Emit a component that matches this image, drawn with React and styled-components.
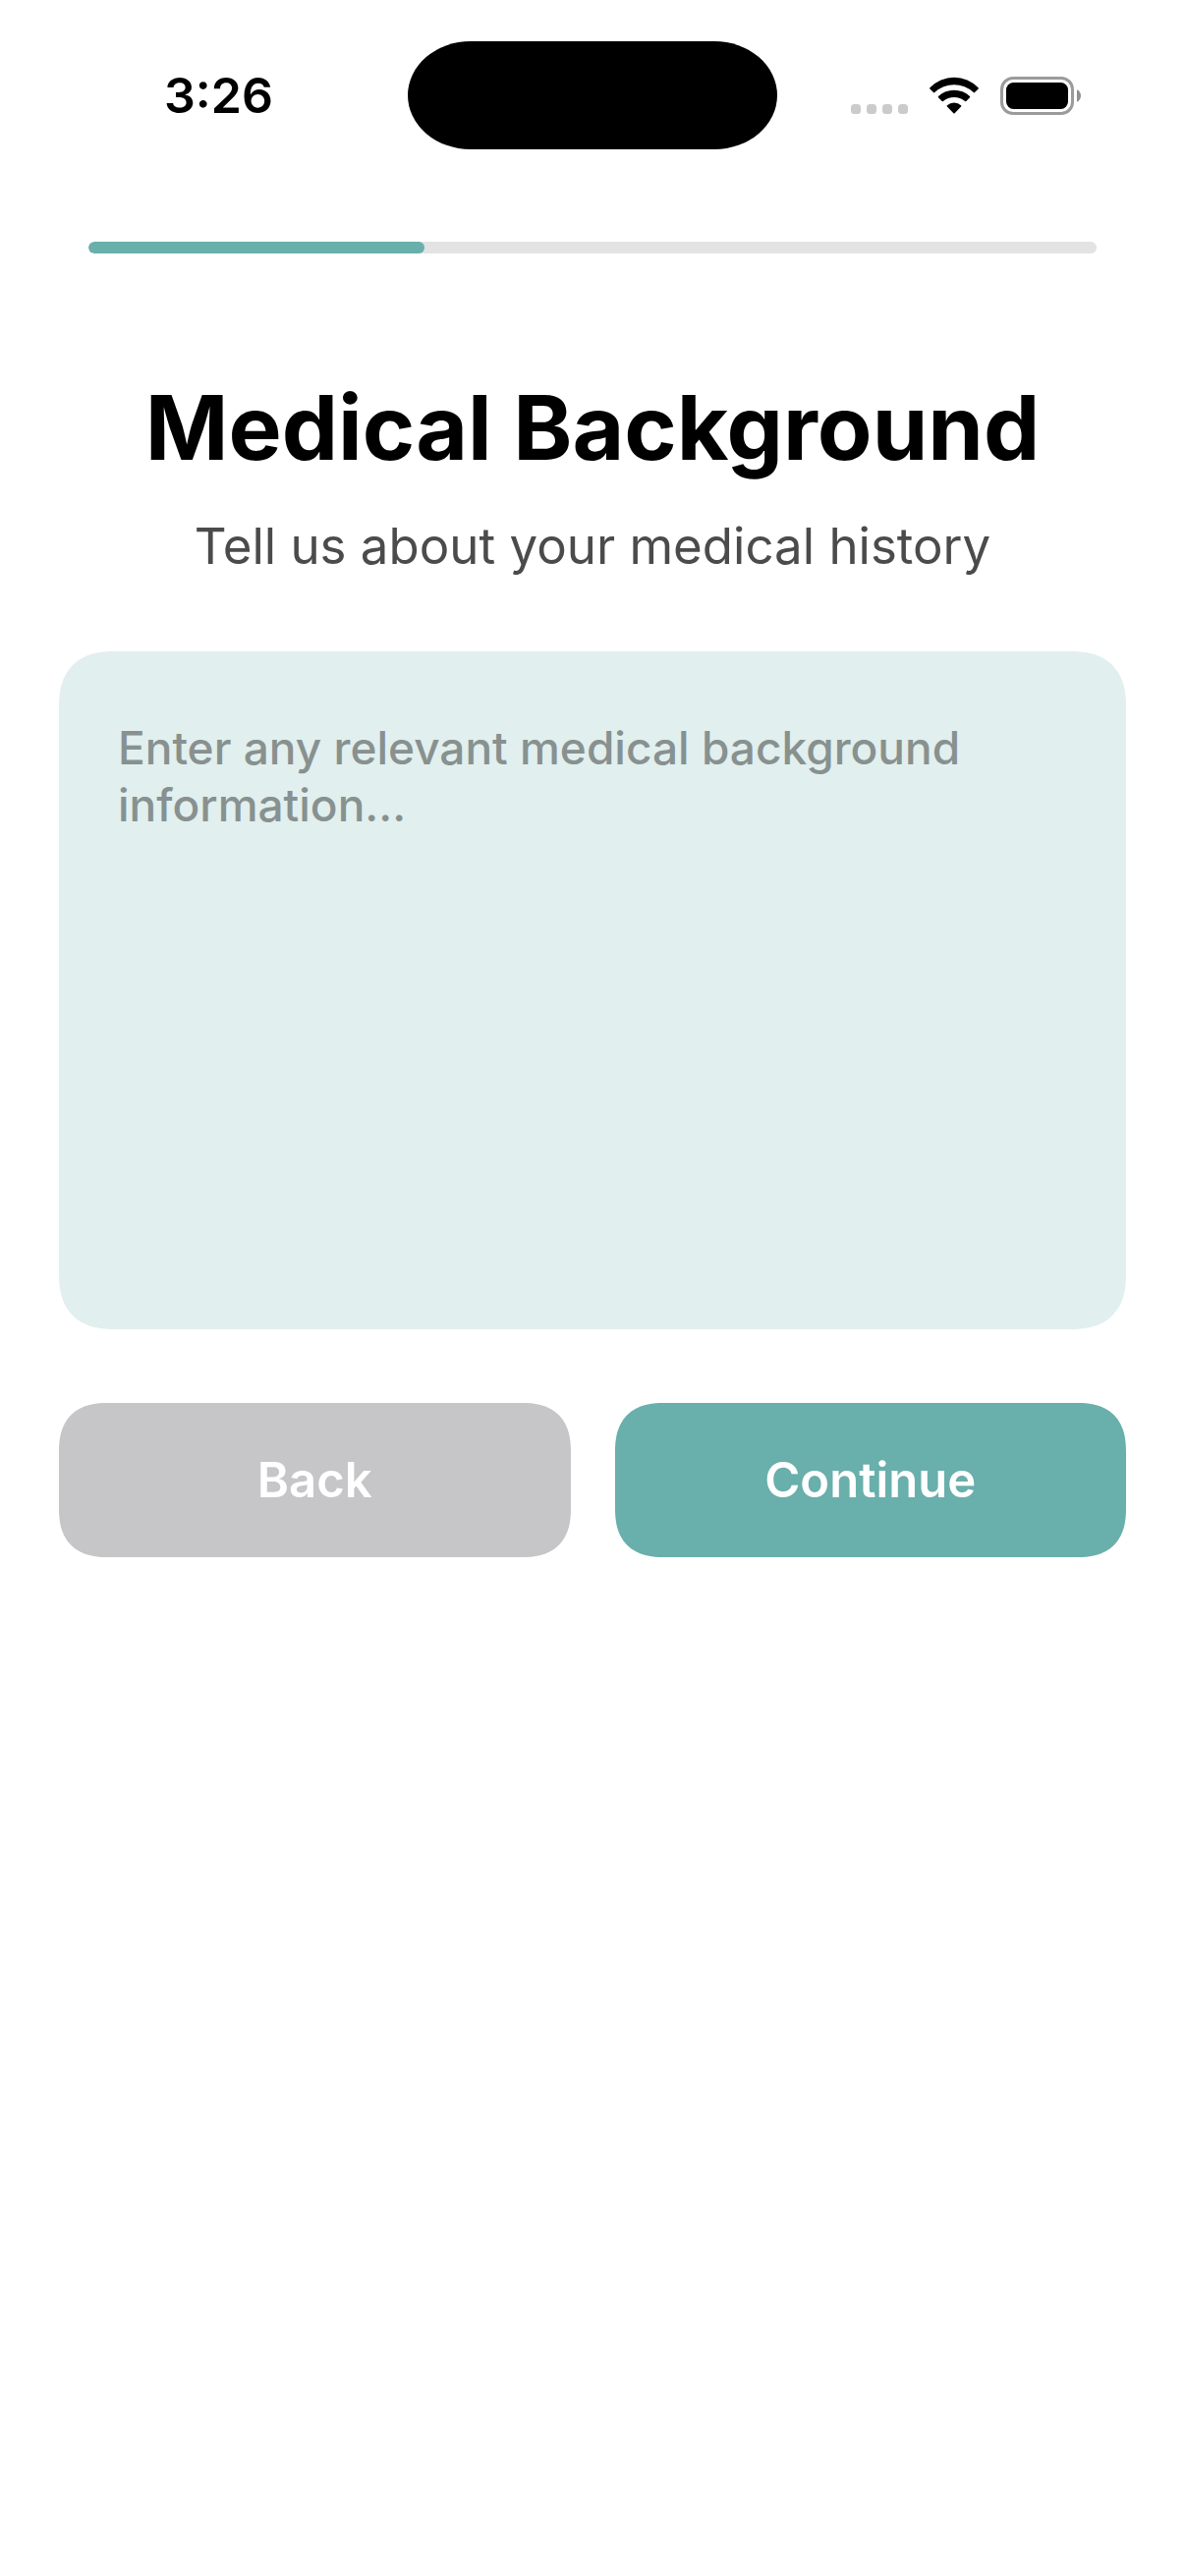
import React from "react";
import styled, { createGlobalStyle } from "styled-components";
import { useState } from "react";

const GlobalStyle = createGlobalStyle`
  * {
    box-sizing: border-box;
  }
  body {
    margin: 0;
    background: #ffffff;
    font-family: Inter, "Liberation Sans", sans-serif;
  }
`;

const StatusBar = styled.header`
  display: grid;
  grid-template-columns: 1fr 376px 1fr;
  align-items: center;
  padding-top: 42px;
`;

const Time = styled.span`
  padding-left: 167px;
  color: #000000;
  font-size: 50px;
  font-weight: 600;
  line-height: 60px;
`;

const Island = styled.div`
  height: 110px;
  background: #000000;
  border-radius: 64px / 55px;
`;

const StatusIcons = styled.div`
  display: flex;
  justify-content: flex-end;
  gap: 22px;
  padding-right: 106px;
`;

const Page = styled.main`
  padding: 94px 60px 60px;
`;

const ProgressTrack = styled.div`
  height: 12px;
  margin: 0 30px;
  background: #e3e3e3;
  border-radius: 6px;
  overflow: hidden;
`;

const ProgressFill = styled.div`
  height: 100%;
  background: #69afac;
  border-radius: 6px;
`;

const Title = styled.h1`
  margin: 120px 0 0;
  color: #000000;
  font-size: 91px;
  font-weight: 700;
  line-height: 114px;
  text-align: center;
`;

const Subtitle = styled.p`
  margin: 32px 0 0;
  color: #4b4b4b;
  font-size: 51px;
  font-weight: 400;
  line-height: 64px;
  text-align: center;
`;

const HistoryInput = styled.textarea`
  display: block;
  width: 100%;
  height: 690px;
  margin: 75px 0;
  padding: 69px 60px;
  border: none;
  outline: none;
  resize: none;
  background: #e1efee;
  border-radius: 48px;
  color: #000000;
  font-family: inherit;
  font-size: 46px;
  font-weight: 500;
  line-height: 58px;

  @supports (corner-shape: superellipse(1.3)) {
    border-radius: 57px;
    corner-shape: superellipse(1.3);
  }

  &::placeholder {
    color: #88918f;
    opacity: 1;
  }
`;

const ButtonRow = styled.div`
  display: flex;
  gap: 45px;
`;

const StepButton = styled.button`
  flex: 1;
  padding: 48px 0;
  border: none;
  border-radius: 42px;
  background: ${({ $primary }) => ($primary ? "#69afac" : "#c6c6c8")};
  color: #ffffff;
  font-family: inherit;
  font-size: 49px;
  font-weight: 600;
  line-height: 61px;

  @supports (corner-shape: superellipse(1.3)) {
    border-radius: 50px;
    corner-shape: superellipse(1.3);
  }
`;

function SignalIcon() {
  return (
    <svg width="58" height="39" viewBox="0 0 58 39" fill="#cbcbcb">
      {[0, 16, 32, 48].map((x) => (
        <rect key={x} x={x} y="28" width="10" height="10" rx="3.5" />
      ))}
    </svg>
  );
}

function WifiIcon() {
  return (
    <svg width="50" height="39" viewBox="0 0 50 39" fill="#000000">
      <path d="M.4 12.5Q-.2 11.9.4 11.3A34 34 0 0 1 49.6 11.3Q50.2 11.9 49.6 12.5L46 16.1Q45.4 16.7 44.8 16.1A28.7 28.7 0 0 0 5.2 16.1Q4.6 16.7 4 16.1Z" />
      <path d="M9 21.2Q8.4 20.6 9 20A23.4 23.4 0 0 1 41 20Q41.6 20.6 41 21.2L37.3 24.9Q36.7 25.5 36.1 24.9A17.6 17.6 0 0 0 13.9 24.9Q13.3 25.5 12.7 24.9Z" />
      <path d="M17.9 30.4Q17.3 29.8 17.9 29.2A11 11 0 0 1 32.1 29.2Q32.7 29.8 32.1 30.4L25.6 37.2Q25 37.8 24.4 37.2Z" />
    </svg>
  );
}

function BatteryIcon() {
  return (
    <svg width="82" height="39" viewBox="0 0 82 39">
      <rect x="1.5" y="1.5" width="72" height="36" rx="11.5" fill="none" stroke="#9b9b9b" strokeWidth="3" />
      <rect x="6" y="6" width="63" height="27" rx="7.5" fill="#000000" />
      <path d="M78 13.2C80.4 14.2 82 16.7 82 19.5S80.4 24.8 78 25.8Z" fill="#8f8f8f" />
    </svg>
  );
}

export default function App() {
  const [history, setHistory] = useState("");
  const step = 2;
  const totalSteps = 6;

  return (
    <>
      <GlobalStyle />
      <StatusBar>
        <Time>3:26</Time>
        <Island />
        <StatusIcons>
          <SignalIcon />
          <WifiIcon />
          <BatteryIcon />
        </StatusIcons>
      </StatusBar>
      <Page>
        <ProgressTrack>
          <ProgressFill style={{ width: `${(step / totalSteps) * 100}%` }} />
        </ProgressTrack>
        <Title id="history-title">Medical Background</Title>
        <Subtitle>Tell us about your medical history</Subtitle>
        <HistoryInput
          aria-labelledby="history-title"
          placeholder="Enter any relevant medical background information..."
          value={history}
          onChange={(e) => setHistory(e.target.value)}
        />
        <ButtonRow>
          <StepButton type="button">Back</StepButton>
          <StepButton type="button" $primary>
            Continue
          </StepButton>
        </ButtonRow>
      </Page>
    </>
  );
}
